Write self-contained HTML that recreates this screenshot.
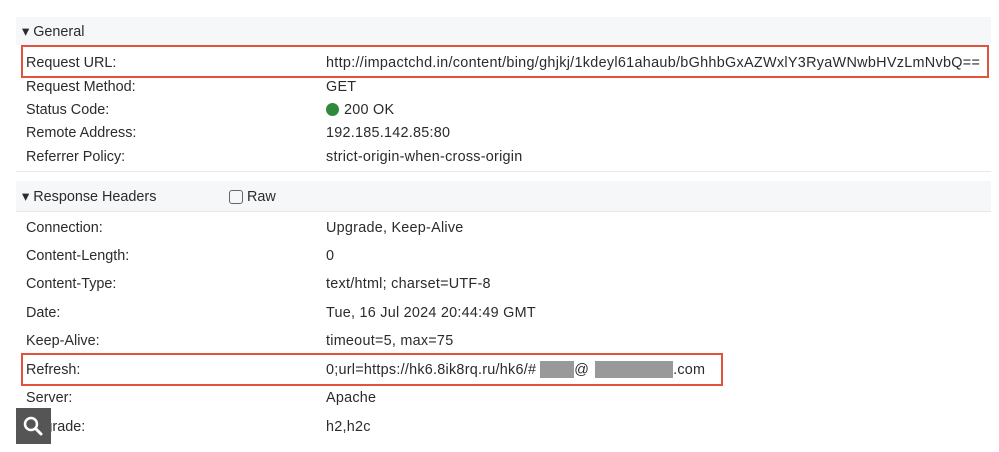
<!DOCTYPE html>
<html><head><style>
body{margin:0;width:999px;height:452px;background:#fff;font-family:"Liberation Sans",sans-serif;font-size:14.4px;color:#2b2b2b;position:relative;overflow:hidden}
.a{position:absolute;white-space:nowrap;line-height:16px}
.v{letter-spacing:0.25px}
.band{position:absolute;left:16px;width:975px;background:#f6f7f9}
.box{position:absolute;border:2px solid #e0533c;box-sizing:border-box}
.grey{display:inline-block;background:#999;height:17px;vertical-align:-3px}
</style></head><body>
<div class="band" style="top:17px;height:28px"></div>
<div class="band" style="top:181px;height:30px;border-bottom:1px solid #e6e8ec"></div>
<div class="band" style="top:171px;height:1px;background:#e6e8ec"></div>
<div class="a" style="left:22px;top:24px">▾ General</div>
<div class="box" style="left:21px;top:45px;width:968px;height:33px"></div>
<div class="a" style="left:26px;top:55px">Request URL:</div>
<div class="a v" style="left:326px;top:55px;letter-spacing:0.3px">http://impactchd.in/content/bing/ghjkj/1kdeyl61ahaub/bGhhbGxAZWxlY3RyaWNwbHVzLmNvbQ==</div>
<div class="a" style="left:26px;top:79px">Request Method:</div><div class="a v" style="left:326px;top:79px">GET</div>
<div class="a" style="left:26px;top:102px">Status Code:</div><div class="a v" style="left:326px;top:102px"><span style="display:inline-block;width:13px;height:13px;border-radius:50%;background:#2f8a3c;vertical-align:-2px;margin-right:5px"></span>200 OK</div>
<div class="a" style="left:26px;top:125px">Remote Address:</div><div class="a v" style="left:326px;top:125px">192.185.142.85:80</div>
<div class="a" style="left:26px;top:149px">Referrer Policy:</div><div class="a v" style="left:326px;top:149px">strict-origin-when-cross-origin</div>
<div class="a" style="left:22px;top:189px">▾ Response Headers</div>
<div style="position:absolute;left:229px;top:190px;width:12px;height:12px;border:1px solid #666;border-radius:3px"></div>
<div class="a" style="left:247px;top:189px">Raw</div>
<div class="a" style="left:26px;top:220px">Connection:</div><div class="a v" style="left:326px;top:220px">Upgrade, Keep-Alive</div>
<div class="a" style="left:26px;top:248px">Content-Length:</div><div class="a v" style="left:326px;top:248px">0</div>
<div class="a" style="left:26px;top:276px">Content-Type:</div><div class="a v" style="left:326px;top:276px">text/html; charset=UTF-8</div>
<div class="a" style="left:26px;top:305px">Date:</div><div class="a v" style="left:326px;top:305px">Tue, 16 Jul 2024 20:44:49 GMT</div>
<div class="a" style="left:26px;top:333px">Keep-Alive:</div><div class="a v" style="left:326px;top:333px">timeout=5, max=75</div>
<div class="box" style="left:21px;top:353px;width:702px;height:33px"></div>
<div class="a" style="left:26px;top:362px">Refresh:</div>
<div class="a v" style="left:326px;top:362px;height:16px">0;url=https://hk6.8ik8rq.ru/hk6/#<span class="grey" style="width:34px;margin-left:4px;vertical-align:top;margin-top:-1px"></span>@<span class="grey" style="width:78px;margin-left:6px;vertical-align:top;margin-top:-1px"></span>.com</div>
<div class="a" style="left:26px;top:390px">Server:</div><div class="a v" style="left:326px;top:390px">Apache</div>
<div class="a" style="left:26px;top:419px">Upgrade:</div><div class="a v" style="left:326px;top:419px">h2,h2c</div>
<div style="position:absolute;left:16px;top:408px;width:35px;height:36px;background:#555">
<svg width="35" height="36" viewBox="0 0 35 36"><circle cx="15" cy="16" r="6" fill="none" stroke="#fff" stroke-width="2.5"/><path d="M19.5 20.5L25 26" stroke="#fff" stroke-width="3" stroke-linecap="round"/></svg></div>
</body></html>
